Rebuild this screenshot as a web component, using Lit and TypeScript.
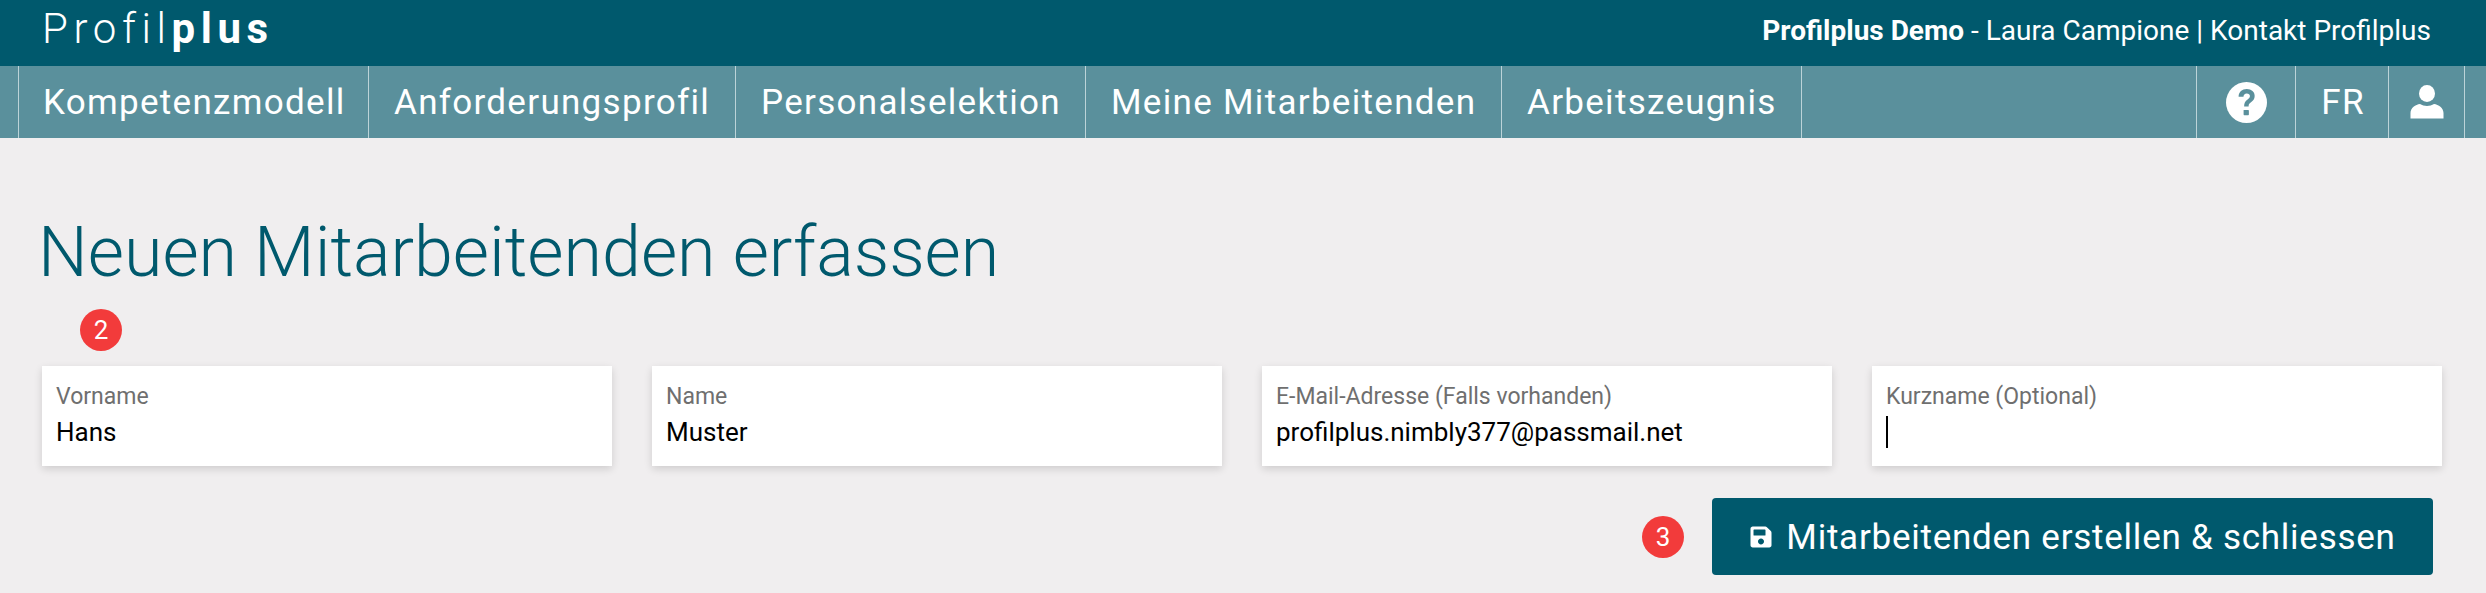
import { LitElement, html, css } from 'lit';
import { customElement } from 'lit/decorators.js';

const NAV_ITEMS = [
  { label: 'Kompetenzmodell', width: 350 },
  { label: 'Anforderungsprofil', width: 367 },
  { label: 'Personalselektion', width: 350 },
  { label: 'Meine Mitarbeitenden', width: 416 },
  { label: 'Arbeitszeugnis', width: 300 },
];

const FIELDS = [
  { label: 'Vorname', value: 'Hans' },
  { label: 'Name', value: 'Muster' },
  { label: 'E-Mail-Adresse (Falls vorhanden)', value: 'profilplus.nimbly377@passmail.net' },
  { label: 'Kurzname (Optional)', value: '', focused: true },
];

@customElement('app-root')
export class AppRoot extends LitElement {
  static styles = css`
    :host {
      display: block;
      height: 593px;
      overflow: hidden;
      background: #f0eeef;
      font-family: Roboto, 'Liberation Sans', sans-serif;
    }

    .topbar {
      height: 66px;
      box-sizing: border-box;
      padding: 0 55px 0 42px;
      display: flex;
      align-items: center;
      justify-content: space-between;
      background: #00596d;
      color: #fff;
    }
    .logo {
      font-size: 42px;
      font-weight: 300;
      letter-spacing: 5.6px;
      line-height: 1;
      margin-top: -8px;
    }
    .logo b {
      font-weight: 700;
    }
    .user {
      font-size: 28px;
      line-height: 1;
      margin-top: -4px;
    }

    .nav {
      height: 72px;
      box-sizing: border-box;
      padding-left: 18px;
      display: flex;
      background: #5a909c;
      color: #fff;
    }
    .nav-item {
      box-sizing: border-box;
      border-left: 1px solid #bcd3d8;
      display: flex;
      align-items: center;
      font-size: 35px;
      letter-spacing: 1.3px;
      padding-left: 25px;
    }
    .nav-item:first-child {
      padding-left: 24px;
    }
    .nav-end {
      border-left: 1px solid #bcd3d8;
      flex: 1;
    }
    .nav-btn {
      box-sizing: border-box;
      border-left: 1px solid #bcd3d8;
      display: flex;
      align-items: center;
      justify-content: center;
      font-size: 35px;
      letter-spacing: 1.3px;
    }
    .nav-btn.help {
      width: 99px;
    }
    .nav-btn.lang {
      width: 93px;
      padding-left: 2px;
    }
    .nav-btn.person {
      width: 76px;
    }
    .nav-tail {
      width: 21px;
      border-left: 1px solid #bcd3d8;
    }

    .page {
      padding: 72px 44px 0 42px;
    }
    h1 {
      margin: 0 0 0 -4px;
      font-size: 70px;
      font-weight: 300;
      line-height: 84px;
      color: #00596d;
    }

    .badge {
      width: 42px;
      height: 42px;
      border-radius: 50%;
      display: flex;
      align-items: center;
      justify-content: center;
      background: #f23b3b;
      color: #fff;
      font-size: 26px;
      flex: none;
    }
    .badge-row {
      padding: 15px 0 15px 38px;
    }

    .fields {
      display: grid;
      grid-template-columns: repeat(4, 570px);
      gap: 40px;
    }
    .field {
      height: 100px;
      box-sizing: border-box;
      padding: 18px 14px 0;
      background: #fff;
      box-shadow: 0 3px 8px rgba(0, 0, 0, 0.14);
    }
    .field label {
      display: block;
      font-size: 23px;
      line-height: 26px;
      color: #6f6f6f;
    }
    .field .value {
      display: flex;
      align-items: center;
      height: 32px;
      margin-top: 6px;
      font-size: 26px;
      color: #000;
    }
    .caret {
      width: 2px;
      height: 32px;
      background: #000;
    }

    .actions {
      display: flex;
      align-items: center;
      justify-content: flex-end;
      gap: 28px;
      margin-top: 32px;
      padding-right: 9px;
    }
    .save {
      width: 721px;
      height: 77px;
      box-sizing: border-box;
      border: none;
      border-radius: 4px;
      padding-top: 2px;
      display: flex;
      align-items: center;
      justify-content: center;
      gap: 13px;
      background: #00596d;
      color: #fff;
      font-family: inherit;
      font-size: 35px;
      letter-spacing: 0.75px;
    }
  `;

  render() {
    return html`
      <div class="topbar">
        <div class="logo">Profil<b>plus</b></div>
        <div class="user"><b>Profilplus Demo</b> - Laura Campione | Kontakt Profilplus</div>
      </div>
      <nav class="nav">
        ${NAV_ITEMS.map(
          (item) => html`<div class="nav-item" style="width:${item.width}px">${item.label}</div>`
        )}
        <div class="nav-end"></div>
        <div class="nav-btn help">
          <svg width="41" height="41" viewBox="0 0 42 42">
            <circle cx="21" cy="21" r="21" fill="#fff" />
            <g transform="translate(21 20.5) scale(1.35) translate(-21 -20.5)">
              <path
                d="M15 16.5c0-3.6 2.700-5.800 6.200-5.800 3.600 0 6 2.200 6 5.200 0 2.400-1.200 3.600-2.800 4.800-1.400 1-1.800 1.600-1.800 3.200h-3.400c0-2.600.7-3.800 2.400-5.100 1.300-1 2-1.600 2-2.800 0-1.200-1-2-2.400-2-1.500 0-2.500 1-2.500 2.500z"
                fill="#5a909c"
              />
              <rect x="18.800" y="26.500" width="4" height="4" rx="0.5" fill="#5a909c" />
            </g>
          </svg>
        </div>
        <div class="nav-btn lang">FR</div>
        <div class="nav-btn person">
          <svg width="34" height="34" viewBox="0 0 34 34">
            <ellipse cx="17" cy="8.500" rx="8" ry="8.500" fill="#fff" />
            <path d="M.5 33.500v-5.500c0-5 5-8.500 9.500-9 2 1.300 4.500 2 7 2s5-.7 7-2c4.500.5 9.500 4 9.500 9v5.500z" fill="#fff" />
          </svg>
        </div>
        <div class="nav-tail"></div>
      </nav>
      <main class="page">
        <h1>Neuen Mitarbeitenden erfassen</h1>
        <div class="badge-row"><div class="badge">2</div></div>
        <div class="fields">
          ${FIELDS.map(
            (f) => html`
              <div class="field">
                <label>${f.label}</label>
                <div class="value">${f.focused ? html`<span class="caret"></span>` : f.value}</div>
              </div>
            `
          )}
        </div>
        <div class="actions">
          <div class="badge">3</div>
          <button class="save">
            <svg width="24" height="24" viewBox="0 0 448 512">
              <path
                fill="#fff"
                d="M433.900 129.900l-83.900-83.900A48 48 0 0 0 316.100 32H48C21.500 32 0 53.500 0 80v352c0 26.500 21.500 48 48 48h352c26.500 0 48-21.500 48-48V163.900a48 48 0 0 0-14.100-34zM224 416c-35.300 0-64-28.700-64-64s28.700-64 64-64 64 28.700 64 64-28.700 64-64 64zm96-304.500V212c0 6.600-5.400 12-12 12H76c-6.600 0-12-5.400-12-12V108c0-6.600 5.400-12 12-12h228.500c3.200 0 6.200 1.300 8.500 3.500l3.500 3.500c2.200 2.200 3.500 5.300 3.500 8.500z"
              />
            </svg>
            Mitarbeitenden erstellen &amp; schliessen
          </button>
        </div>
      </main>
    `;
  }
}
